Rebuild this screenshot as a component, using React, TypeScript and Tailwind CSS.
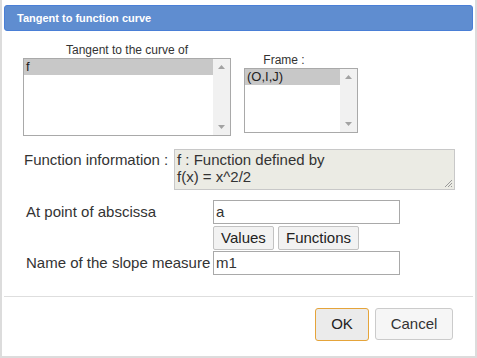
import React from 'react'

const font = { fontFamily: '"Liberation Sans", Arial, sans-serif' }

function ScrollBar() {
  return (
    <div className="flex w-[17px] flex-col items-center justify-between bg-[#f1f1f1] py-[6px]">
      <svg width="7" height="4" viewBox="0 0 7 4">
        <path d="M0 4 L3.5 0 L7 4 Z" fill="#a3a3a3" />
      </svg>
      <svg width="7" height="4" viewBox="0 0 7 4">
        <path d="M0 0 L3.5 4 L7 0 Z" fill="#a3a3a3" />
      </svg>
    </div>
  )
}

function ListBox({ item, className }: { item: string; className: string }) {
  return (
    <div className={`flex border border-[#a9a9a9] bg-white ${className}`}>
      <div className="flex-1">
        <div className="h-[16px] bg-[#c8c8c8] pl-[2px] text-[13px] leading-[15px] text-[#222]">{item}</div>
      </div>
      <ScrollBar />
    </div>
  )
}

export default function App() {
  return (
    <div
      style={font}
      className="h-[358px] w-[477px] overflow-hidden border-x-2 border-b-2 border-[#dcdcdc] bg-white text-[#333]"
    >
      {/* Title bar */}
      <div className="mx-[2px] mt-[5px] flex h-[26px] items-center rounded-[3px] border border-[#4a7fd6] bg-[#5f8dd0] pl-[12px] text-[11px] font-bold text-white">
        Tangent to function curve
      </div>

      {/* Lists */}
      <div className="mt-[12px] flex">
        <div className="ml-[21px] flex w-[208px] flex-col">
          <div className="text-center text-[12px] leading-[14px]">Tangent to the curve of</div>
          <ListBox item="f" className="mt-[1px] h-[78px]" />
        </div>
        <div className="ml-[13px] flex w-[114px] flex-col pt-[10px]">
          <div className="pr-[34px] text-center text-[12px] leading-[14px]">Frame :</div>
          <ListBox item="(O,I,J)" className="mt-[1px] h-[65px]" />
        </div>
      </div>

      {/* Function information */}
      <div className="mt-[13px] flex">
        <div className="ml-[22px] w-[150px] pt-[2px] text-[15px] leading-[17px]">Function information :</div>
        <div className="relative h-[41px] w-[281px] border border-[#c8c8c8] bg-[#ebebe4] pl-[2px] text-[15px] leading-[17px]">
          <div className="pt-[1px]">f : Function defined by</div>
          <div>f(x) = x^2/2</div>
          <svg className="absolute bottom-[2px] right-[2px]" width="8" height="8" viewBox="0 0 8 8">
            <path d="M8 1 L1 8 M8 4 L4 8 M8 7 L7 8" stroke="#9a9a9a" strokeWidth="1" />
          </svg>
        </div>
      </div>

      {/* Abscissa */}
      <div className="mt-[10px] flex items-center">
        <div className="ml-[24px] w-[187px] text-[15px]">At point of abscissa</div>
        <div className="flex h-[24px] w-[187px] items-center border border-[#a9a9a9] pl-[2px] text-[15px]">a</div>
      </div>
      <div className="ml-[211px] mt-[2px] flex gap-[4px]">
        <button className="h-[24px] w-[61px] rounded-[2px] border border-[#c2c2c2] bg-[#f2f2f2] text-[15px] text-[#222]">
          Values
        </button>
        <button className="h-[24px] w-[81px] rounded-[2px] border border-[#c2c2c2] bg-[#f2f2f2] text-[15px] text-[#222]">
          Functions
        </button>
      </div>
      <div className="mt-[1px] flex items-center">
        <div className="ml-[24px] w-[187px] text-[15px]">Name of the slope measure</div>
        <div className="flex h-[24px] w-[187px] items-center border border-[#a9a9a9] pl-[2px] text-[15px]">m1</div>
      </div>

      {/* Footer */}
      <div className="mx-[2px] mt-[21px] border-t border-[#dedede]" />
      <div className="mr-[22px] mt-[11px] flex justify-end gap-[6px]">
        <button className="h-[33px] w-[54px] rounded-[3px] border border-[#e5a43a] bg-[#ebebeb] text-[15px] text-[#222]">
          OK
        </button>
        <button className="h-[32px] w-[78px] rounded-[3px] border border-[#cbcbcb] bg-[#f6f6f6] text-[15px] text-[#333]">
          Cancel
        </button>
      </div>
    </div>
  )
}
